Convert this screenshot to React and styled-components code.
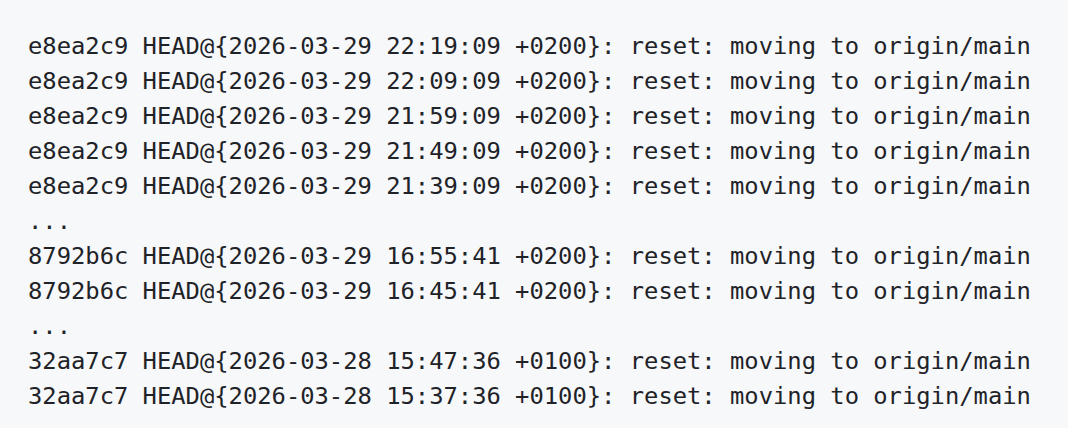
import React from 'react';
import styled, { createGlobalStyle } from 'styled-components';

const GlobalStyle = createGlobalStyle`
  html, body {
    margin: 0;
    padding: 0;
    background: #f6f8fa;
  }
`;

const CodeBlock = styled.pre`
  margin: 0;
  box-sizing: border-box;
  width: 1068px;
  height: 428px;
  padding: 29px 28px 0 28px;
  background: #f6f8fa;
  color: #1f2328;
  font-family: "DejaVu Sans Mono", "Liberation Mono", monospace;
  font-size: 23.8px;
  line-height: 35px;
  overflow: hidden;
`;

const Line = styled.div`
  white-space: pre;
`;

const lines = [
  'e8ea2c9 HEAD@{2026-03-29 22:19:09 +0200}: reset: moving to origin/main',
  'e8ea2c9 HEAD@{2026-03-29 22:09:09 +0200}: reset: moving to origin/main',
  'e8ea2c9 HEAD@{2026-03-29 21:59:09 +0200}: reset: moving to origin/main',
  'e8ea2c9 HEAD@{2026-03-29 21:49:09 +0200}: reset: moving to origin/main',
  'e8ea2c9 HEAD@{2026-03-29 21:39:09 +0200}: reset: moving to origin/main',
  '...',
  '8792b6c HEAD@{2026-03-29 16:55:41 +0200}: reset: moving to origin/main',
  '8792b6c HEAD@{2026-03-29 16:45:41 +0200}: reset: moving to origin/main',
  '...',
  '32aa7c7 HEAD@{2026-03-28 15:47:36 +0100}: reset: moving to origin/main',
  '32aa7c7 HEAD@{2026-03-28 15:37:36 +0100}: reset: moving to origin/main',
];

const App = () => {
  return (
    <>
      <GlobalStyle />
      <CodeBlock>
        {lines.map((l, i) => (
          <Line key={i}>{l}</Line>
        ))}
      </CodeBlock>
    </>
  );
};

export default App;
